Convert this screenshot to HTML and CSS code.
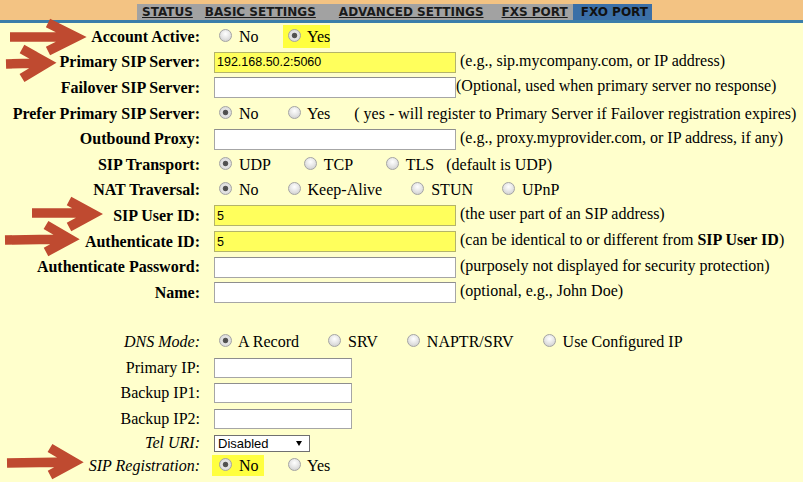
FILE: index.html
```html
<!DOCTYPE html>
<html lang="en">
<head>
    <meta charset="UTF-8">
    <meta name="viewport" content="width=device-width, initial-scale=1.0">
    <title>FXO Port Settings</title>
    <link rel="stylesheet" href="styles.css">
</head>
<body>
    <div class="topbar">
        <ul class="tabs">
            <li><a href="#">STATUS</a></li>
            <li><a href="#">BASIC SETTINGS</a></li>
            <li><a href="#">ADVANCED SETTINGS</a></li>
            <li><a href="#">FXS PORT</a></li>
            <li class="active">FXO PORT</li>
        </ul>
    </div>

    <!-- Account settings -->
    <div class="form main">
        <div class="row">
            <label>Account Active:</label>
            <div class="field"><span class="opt"><input type="radio" name="active"> No</span><span class="opt hl"><input type="radio" name="active" checked> Yes</span></div>
        </div>
        <div class="row">
            <label>Primary SIP Server:</label>
            <div class="field"><input type="text" class="text filled" value="192.168.50.2:5060"> (e.g., sip.mycompany.com, or IP address)</div>
        </div>
        <div class="row">
            <label>Failover SIP Server:</label>
            <div class="field"><input type="text" class="text">(Optional, used when primary server no response)</div>
        </div>
        <div class="row">
            <label>Prefer Primary SIP Server:</label>
            <div class="field"><span class="opt"><input type="radio" name="prefer" checked> No</span><span class="opt"><input type="radio" name="prefer"> Yes</span><span class="note">( yes - will register to Primary Server if Failover registration expires)</span></div>
        </div>
        <div class="row">
            <label>Outbound Proxy:</label>
            <div class="field"><input type="text" class="text"> (e.g., proxy.myprovider.com, or IP address, if any)</div>
        </div>
        <div class="row transport">
            <label>SIP Transport:</label>
            <div class="field"><span class="opt"><input type="radio" name="transport" checked> UDP</span><span class="opt"><input type="radio" name="transport"> TCP</span><span class="opt"><input type="radio" name="transport"> TLS</span><span class="note">(default is UDP)</span></div>
        </div>
        <div class="row">
            <label>NAT Traversal:</label>
            <div class="field"><span class="opt"><input type="radio" name="nat" checked> No</span><span class="opt"><input type="radio" name="nat"> Keep-Alive</span><span class="opt"><input type="radio" name="nat"> STUN</span><span class="opt"><input type="radio" name="nat"> UPnP</span></div>
        </div>
        <div class="row">
            <label>SIP User ID:</label>
            <div class="field"><input type="text" class="text filled" value="5"> (the user part of an SIP address)</div>
        </div>
        <div class="row">
            <label>Authenticate ID:</label>
            <div class="field"><input type="text" class="text filled" value="5"> (can be identical to or different from <b>SIP User ID</b>)</div>
        </div>
        <div class="row">
            <label>Authenticate Password:</label>
            <div class="field"><input type="password" class="text"> (purposely not displayed for security protection)</div>
        </div>
        <div class="row">
            <label>Name:</label>
            <div class="field"><input type="text" class="text"> (optional, e.g., John Doe)</div>
        </div>
    </div>

    <!-- DNS and registration -->
    <div class="form extra">
        <div class="row">
            <label class="em">DNS Mode:</label>
            <div class="field"><span class="opt"><input type="radio" name="dns" checked> A Record</span><span class="opt"><input type="radio" name="dns"> SRV</span><span class="opt"><input type="radio" name="dns"> NAPTR/SRV</span><span class="opt"><input type="radio" name="dns"> Use Configured IP</span></div>
        </div>
        <div class="row">
            <label>Primary IP:</label>
            <div class="field"><input type="text" class="text short"></div>
        </div>
        <div class="row">
            <label>Backup IP1:</label>
            <div class="field"><input type="text" class="text short"></div>
        </div>
        <div class="row">
            <label>Backup IP2:</label>
            <div class="field"><input type="text" class="text short"></div>
        </div>
        <div class="row tel">
            <label class="em">Tel URI:</label>
            <div class="field"><span class="select"><select><option>Disabled</option><option>User=Phone</option><option>Enabled</option></select></span></div>
        </div>
        <div class="row reg">
            <label class="em">SIP Registration:</label>
            <div class="field"><span class="opt hl"><input type="radio" name="reg" checked> No</span><span class="opt"><input type="radio" name="reg"> Yes</span></div>
        </div>
    </div>

    <!-- Annotation arrows -->
    <svg class="arrows" width="803" height="482" viewBox="0 0 803 482">
        <g fill="none" stroke="#bf4a30" stroke-width="9.5" stroke-linejoin="miter">
            <path d="M10 37 L73 37 M48 23 L76 37 L48 51"/>
            <path d="M6 64 L44 63 M22 49 L47 63 L22 78"/>
            <path d="M32 213 L90 213 M69 201 L93 214 L69 227"/>
            <path d="M5 240 L67 239 M46 225 L70 239 L46 252"/>
            <path d="M7 463 L71 462 M50 448 L74 462 L50 475"/>
        </g>
    </svg>
</body>
</html>
```

FILE: styles.css
```css
/* Global Styles */
* {
    box-sizing: border-box;
}

body {
    margin: 0;
    position: relative;
    height: 482px;
    overflow: hidden;
    background-color: #ffffcc;
    font-family: "Liberation Serif", "Times New Roman", serif;
    font-size: 16px;
    color: #000;
}

/* Top tabs */
.topbar {
    height: 23px;
    padding-top: 4px;
    background-color: #f3c383;
    border-bottom: 3px solid #3b7ea9;
}

.tabs {
    list-style: none;
    margin: 0 0 0 137px;
    padding: 0;
    display: flex;
    height: 16px;
    font-family: "DejaVu Sans", Verdana, sans-serif;
    font-size: 12px;
    font-weight: bold;
    line-height: 16px;
}

.tabs li {
    background-color: #a2a2a2;
    padding: 0 6px;
    white-space: nowrap;
}

.tabs li:first-child {
    padding-left: 5px;
}

.tabs li:nth-child(3) {
    padding-left: 17px;
}

.tabs li:nth-child(4) {
    padding-left: 12px;
    padding-right: 5px;
}

.tabs li.active {
    background-color: #3b6fa7;
    color: #111;
    padding: 0 4px 0 8px;
}

.tabs a {
    color: #1a1a1a;
    text-decoration: underline;
}

/* Form rows */
.main {
    margin-top: 1px;
}

.extra {
    margin-top: 23.6px;
}

.row {
    display: grid;
    grid-template-columns: 200px 1fr;
    column-gap: 14px;
    align-items: center;
    height: 25.6px;
    white-space: nowrap;
}

.row label {
    text-align: right;
    font-weight: bold;
}

.extra .row label {
    font-weight: normal;
}

.extra .row label.em {
    font-style: italic;
}

.extra .row.tel {
    height: 23px;
}

.extra .row.reg {
    height: 22px;
}

/* Radio options */
.opt + .opt {
    margin-left: 24px;
}

.transport .opt + .opt {
    margin-left: 28px;
}

.note {
    margin-left: 24px;
}

.transport .note {
    margin-left: 12px;
}

.hl {
    background-color: #ffff3f;
    padding: 3px 0;
}

.reg .hl {
    margin-left: -2px;
    padding: 2px 5px 2px 2px;
}

.reg .opt + .opt {
    margin-left: 19px;
}

input[type="radio"] {
    -webkit-appearance: none;
    appearance: none;
    width: 13px;
    height: 13px;
    margin: 0 3px 0 5px;
    border: 1px solid #a4a4a4;
    border-radius: 50%;
    background: radial-gradient(circle at 50% 35%, #ffffff 0, #e8e8e8 45%, #c8c8c8 100%);
    vertical-align: baseline;
}

input[type="radio"]:checked {
    background: radial-gradient(circle, #4a4a4a 0, #575757 2.3px, #e6e6e6 3.2px, #cfcfcf 100%);
}

/* Text fields */
.text {
    width: 242px;
    height: 21px;
    margin: 0;
    padding: 0 2px;
    border: 1px solid #a6a6a6;
    border-top-color: #8e8e8e;
    background-color: #fff;
    font-family: "Liberation Sans", Arial, sans-serif;
    font-size: 12.5px;
    color: #000;
    vertical-align: middle;
}

.text.filled {
    background-color: #ffff5c;
    border-color: #b4b46a;
}

.text.short {
    width: 138px;
    height: 20px;
}

/* Select box */
.select {
    display: inline-block;
    position: relative;
    vertical-align: middle;
}

.select select {
    -webkit-appearance: none;
    appearance: none;
    display: block;
    width: 96px;
    height: 17px;
    margin: 0;
    padding: 0 0 0 3px;
    border: 1px solid #707070;
    border-radius: 0;
    background-color: #fff;
    font-family: "Liberation Sans", Arial, sans-serif;
    font-size: 13px;
    line-height: 15px;
    color: #000;
}

.select::after {
    content: "";
    position: absolute;
    right: 8px;
    top: 6px;
    border-left: 3px solid transparent;
    border-right: 3px solid transparent;
    border-top: 5px solid #000;
    pointer-events: none;
}

/* Annotation arrows */
.arrows {
    position: absolute;
    top: 0;
    left: 0;
    pointer-events: none;
}
```
